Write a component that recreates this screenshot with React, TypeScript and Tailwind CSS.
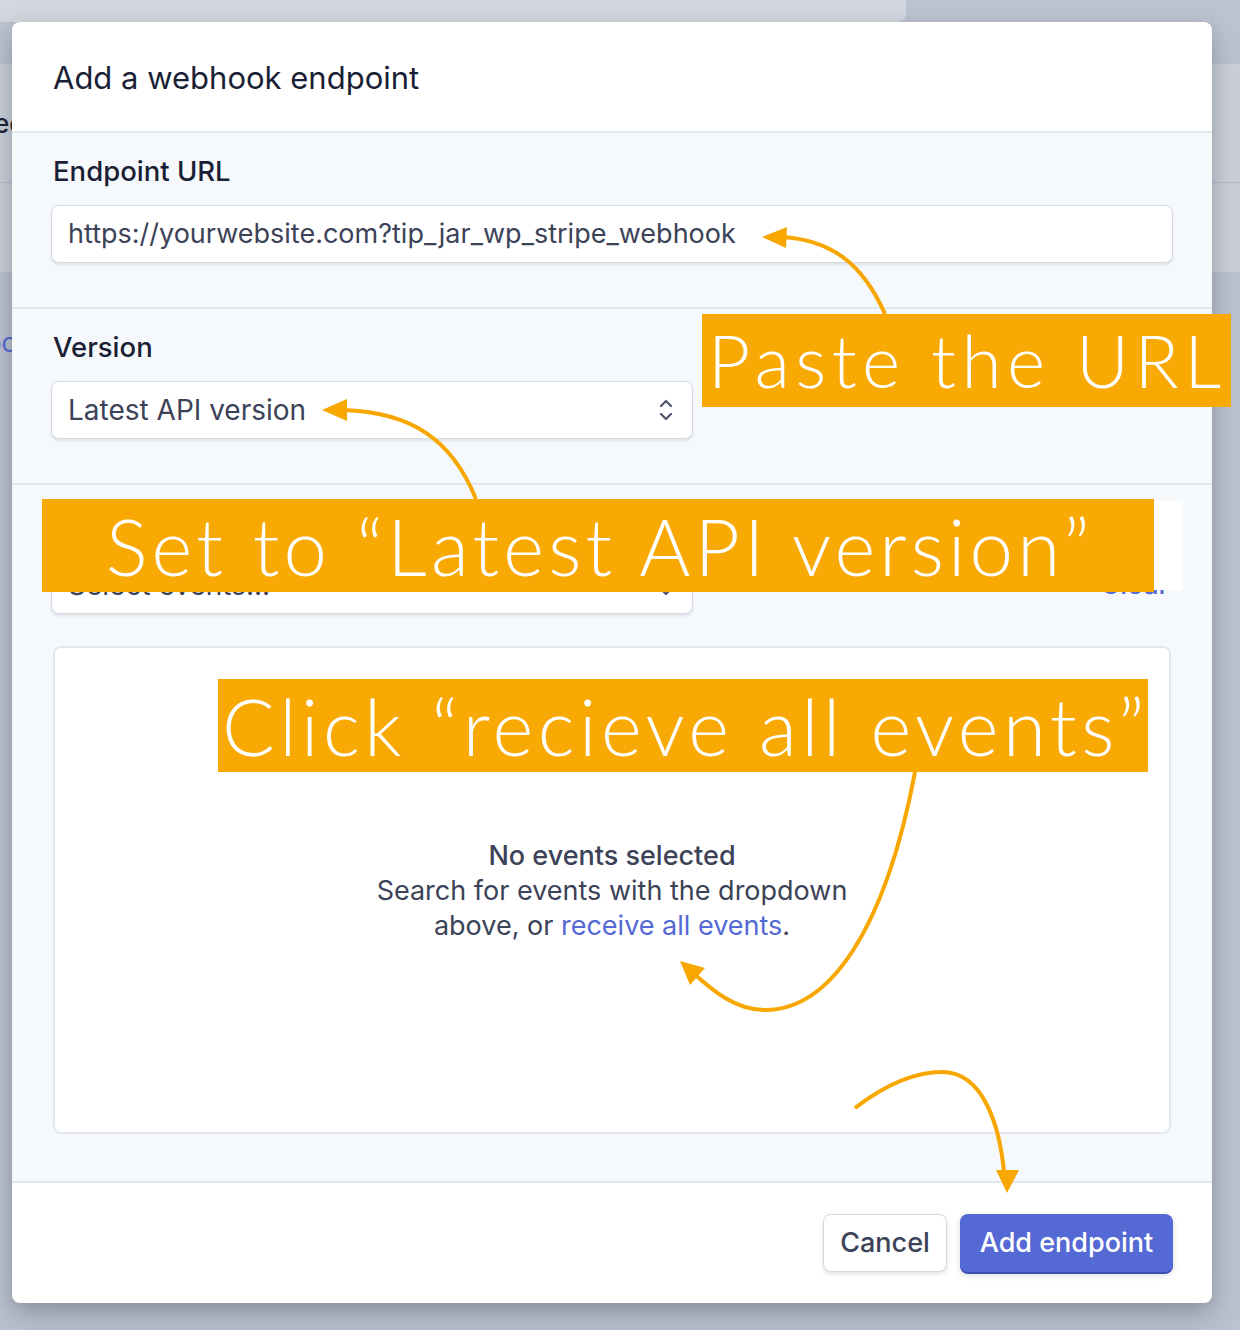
import React from "react";

const ui = { fontFamily: "Inter, 'Noto Sans', sans-serif" };
const thin = { fontFamily: "Lato, 'Noto Sans', sans-serif" };

const UpDown = () => (
	<svg width="16" height="26" viewBox="0 0 16 26" fill="none" stroke="#4f566b" strokeWidth="2.2" strokeLinecap="round" strokeLinejoin="round">
		<path d="M3 9 L8 4 L13 9" />
		<path d="M3 17 L8 22 L13 17" />
	</svg>
);

const Select = ({ label }: { label: string }) => (
	<div className="flex h-[58px] w-[642px] items-center justify-between rounded-[8px] border border-[#d5d9e0] bg-white pl-[16px] pr-[18px] shadow-[0_2px_3px_rgba(60,66,87,0.12)]">
		<span className="text-[28px] text-[#3c4257]">{label}</span>
		<UpDown />
	</div>
);

const Annotations = () => (
	<>
		{/* white patch left over from the screenshot */}
		<div className="absolute left-[1150px] top-[501px] h-[89px] w-[33px] bg-white" />

		<div className="absolute left-[702px] top-[314px] flex h-[93px] w-[529px] items-center overflow-hidden bg-[#f9a903]">
			<span style={thin} className="whitespace-nowrap pl-[6px] text-[73px] font-light leading-none tracking-[0.075em] text-white">Paste the URL</span>
		</div>
		<div className="absolute left-[42px] top-[499px] flex h-[93px] w-[1112px] items-center overflow-hidden bg-[#f9a903]">
			<span style={thin} className="whitespace-nowrap pl-[64px] text-[78px] font-light leading-none tracking-[0.054em] text-white">Set to “Latest API version”</span>
		</div>
		<div className="absolute left-[218px] top-[679px] flex h-[93px] w-[930px] items-center overflow-hidden bg-[#f9a903]">
			<span style={thin} className="whitespace-nowrap pl-[4px] text-[78px] font-light leading-none tracking-[0.058em] text-white">Click “recieve all events”</span>
		</div>

		<svg className="absolute left-0 top-0" width="1240" height="1330" viewBox="0 0 1240 1330" fill="none">
			<g stroke="#f7a700" strokeWidth="4" strokeLinecap="butt" fill="none">
				<path d="M885 314 C862 262 830 240 782 237" />
				<path d="M476 499 C452 440 412 412 343 410" />
				<path d="M915 772 C885 930 830 1010 765 1010 C735 1010 712 990 692 972" />
				<path d="M855 1108 C885 1085 915 1072 942 1072 C985 1072 1000 1130 1004 1172" />
			</g>
			<g fill="#f7a700">
				<path d="M762 237 L787 227 L786 248 Z" />
				<path d="M322 410 L347 399 L347 421 Z" />
				<path d="M680 961 L705 968 L690 985 Z" />
				<path d="M1007 1193 L996 1170 L1019 1170 Z" />
			</g>
		</svg>
	</>
);

const Backdrop = () => (
	<div className="flex flex-col">
		<div className="h-[22px] w-[906px] rounded-br-[8px] bg-[#d3d7df]" />
		<div className="h-[42px]" />
		<div className="flex h-[208px] flex-col bg-[#ccd1da]">
			<div className="flex h-[119px] items-center border-b border-[#b6bcc8]">
				<span style={ui} className="ml-[-6px] text-[26px] font-medium text-[#1a1f36]">ec</span>
			</div>
		</div>
		<div className="flex h-[140px] items-center">
			<span style={ui} className="ml-[-14px] text-[26px] text-[#5469d4]">oc</span>
		</div>
	</div>
);

export default function App() {
	return (
		<div className="relative h-[1330px] w-[1240px] overflow-hidden bg-[#bcc3d1]" style={ui}>
			<Backdrop />

			<div className="absolute left-[12px] top-[22px] flex w-[1200px] flex-col overflow-hidden rounded-[8px] bg-white shadow-[0_15px_35px_rgba(50,60,80,0.25),0_5px_15px_rgba(0,0,0,0.12)]">
				<div className="flex h-[111px] items-center border-b-2 border-[#e3e8ee] px-[41px] pt-[3px]">
					<h2 className="text-[31px] font-normal text-[#1a1f36]">Add a webhook endpoint</h2>
				</div>

				<div className="flex flex-col border-b-2 border-[#e3e8ee] bg-[#f6f9fc] px-[39px] pb-[44px] pt-[22px]">
					<label className="mb-[18px] pl-[2px] text-[27.5px] leading-[32px] font-medium text-[#1a1f36]">Endpoint URL</label>
					<div className="flex h-[58px] items-center rounded-[8px] border border-[#d5d9e0] bg-white pl-[16px] shadow-[0_2px_3px_rgba(60,66,87,0.12)]">
						<span className="text-[27px] text-[#3c4257]">https://yourwebsite.com?tip_jar_wp_stripe_webhook</span>
					</div>
				</div>

				<div className="flex flex-col border-b-2 border-[#e3e8ee] bg-[#f6f9fc] px-[39px] pb-[44px] pt-[22px]">
					<label className="mb-[18px] pl-[2px] text-[27.5px] leading-[32px] font-medium text-[#1a1f36]">Version</label>
					<Select label="Latest API version" />
				</div>

				<div className="flex flex-col border-b-2 border-[#e3e8ee] bg-[#f6f9fc] px-[39px] pb-[47px] pt-[22px]">
					<label className="mb-[17px] pl-[2px] text-[27.5px] leading-[32px] font-medium text-[#1a1f36]">Events to send</label>
					<div className="flex items-center justify-between">
						<Select label="Select events..." />
						<a className="pr-[4px] text-[27px] font-medium text-[#5469d4]">Clear</a>
					</div>
					<div className="mx-[2px] mt-[32px] flex h-[488px] flex-col items-center justify-center rounded-[8px] border-2 border-[#e3e8ee] bg-white text-center text-[27px] leading-[35px] text-[#3c4257]">
						<p className="font-medium">No events selected</p>
						<p>Search for events with the dropdown</p>
						<p>
							above, or <a className="text-[#5469d4]">receive all events</a>.
						</p>
					</div>
				</div>

				<div className="flex h-[120px] items-center justify-end gap-[13px] px-[39px]">
					<button className="h-[58px] w-[124px] rounded-[8px] border border-[#d5d9e0] bg-white text-[27px] font-medium text-[#3c4257] shadow-[0_2px_4px_rgba(60,66,87,0.15)]">
						Cancel
					</button>
					<button className="h-[58px] w-[213px] rounded-[8px] bg-[#5469d4] text-[27px] font-medium text-white shadow-[0_2px_0_#3f4fb0,0_3px_6px_rgba(60,66,87,0.2)]">
						Add endpoint
					</button>
				</div>
			</div>

			<Annotations />
		</div>
	);
}
